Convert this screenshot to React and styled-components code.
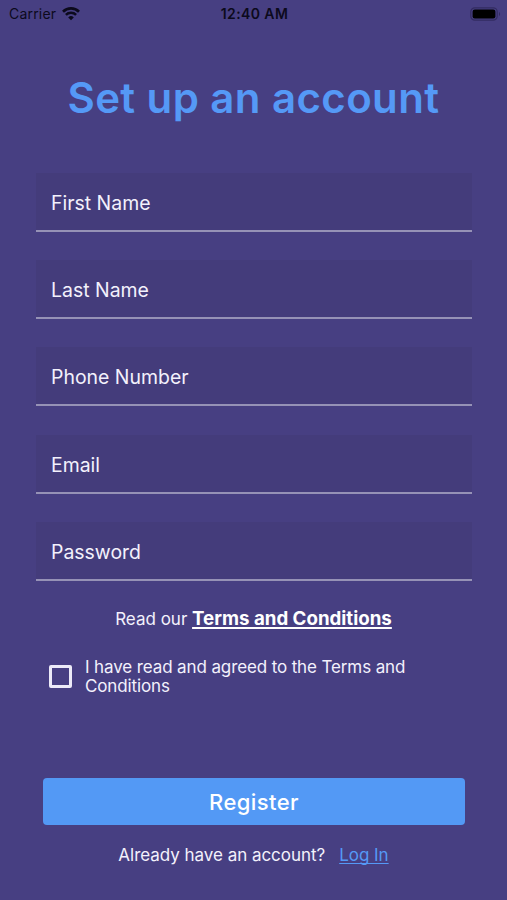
import React, { useState } from 'react';
import styled, { createGlobalStyle } from 'styled-components';

const GlobalStyle = createGlobalStyle`
	* {
		box-sizing: border-box;
	}

	body {
		margin: 0;
		background: #473f82;
		font-family: Inter, 'Liberation Sans', sans-serif;
	}
`;

const Screen = styled.main`
	display: flex;
	flex-direction: column;
	width: 507px;
	height: 900px;
	overflow: hidden;
	background: #473f82;
	color: #f3f1fc;
	white-space: nowrap;
`;

const StatusBar = styled.header`
	display: grid;
	grid-template-columns: 1fr auto 1fr;
	align-items: center;
	height: 28px;
	padding: 0 6px 0 9px;
	color: #0c0a1c;
	font-size: 14px;
	line-height: 28px;
`;

const Carrier = styled.div`
	display: flex;
	align-items: center;
	gap: 6px;
	letter-spacing: 0.2px;
`;

const Clock = styled.div`
	margin-right: 1px;
	font-weight: 600;
	letter-spacing: 0.4px;
`;

const BatteryIcon = styled.svg`
	justify-self: end;
`;

const Title = styled.h1`
	margin: 45px 0 0;
	color: #5599f6;
	font-size: 42px;
	font-weight: 600;
	line-height: 50px;
	letter-spacing: 0.4px;
	text-align: center;
`;

const Fields = styled.div`
	display: grid;
	gap: 28.2px;
	margin: 50px 35px 0 36px;
`;

const Field = styled.div`
	height: 59px;
	padding: 0 15px;
	border-bottom: 2px solid #9692b6;
	background: #443c7b;
	font-size: 19.45px;
	line-height: 60px;
`;

const Terms = styled.p`
	margin: 24px 0 0;
	font-size: 17px;
	line-height: 28px;
	text-align: center;
`;

const TermsLink = styled.a`
	color: #ffffff;
	font-size: 18.7px;
	font-weight: 700;
	text-decoration: underline;
	text-decoration-thickness: 1.5px;
	text-underline-offset: 2px;
	text-decoration-skip-ink: none;
`;

const Agreement = styled.label`
	display: flex;
	align-items: center;
	gap: 13px;
	margin: 25px 0 0 49px;
	font-size: 17px;
	line-height: 19.5px;
	letter-spacing: -0.12px;
`;

const Checkbox = styled.input`
	appearance: none;
	width: 23px;
	height: 23px;
	margin: 0 0 2px;
	border: 3px solid #eceaf8;
	border-radius: 2px;

	&:checked {
		background: #5399f5;
	}
`;

const RegisterButton = styled.button`
	height: 47px;
	margin: 81px 42px 0 43px;
	padding: 1px 0 0;
	border: none;
	border-radius: 4px;
	background: #5399f5;
	color: #ffffff;
	font-family: inherit;
	font-size: 22px;
	font-weight: 500;
	line-height: 46px;
	letter-spacing: 0.4px;
`;

const LoginRow = styled.div`
	display: flex;
	justify-content: center;
	gap: 14px;
	margin-top: 18px;
	font-size: 17px;
	line-height: 24px;
	letter-spacing: -0.03px;
`;

const LoginLink = styled.a`
	color: #5599f6;
	text-decoration: underline;
	text-decoration-thickness: 1px;
	text-underline-offset: 2px;
	text-decoration-skip-ink: none;
`;

const fields = ['First Name', 'Last Name', 'Phone Number', 'Email', 'Password'];

const App = () => {
	const [agreed, setAgreed] = useState(false);

	return (
		<>
			<GlobalStyle />
			<Screen>
				<StatusBar>
					<Carrier>
						<span>Carrier</span>
						<svg width='18' height='14' viewBox='0 0 18 14' fill='none' stroke='#0c0a1c'>
							<path d='M1 4.7a11.5 11.5 0 0 1 16 0' strokeWidth='2.7' />
							<path d='M3.9 7.9a7.2 7.2 0 0 1 10.2 0' strokeWidth='2.5' />
							<path d='M9 13.2 6.2 10.4a4 4 0 0 1 5.6 0Z' fill='#0c0a1c' stroke='none' />
						</svg>
					</Carrier>
					<Clock>12:40 AM</Clock>
					<BatteryIcon width='31' height='14' viewBox='0 0 31 14'>
						<rect x='0.8' y='0.8' width='26.4' height='12.4' rx='4' fill='none' stroke='#332c61' strokeWidth='1.2' />
						<rect x='2.6' y='2.6' width='22.8' height='8.8' rx='2.2' fill='#000000' />
						<path d='M29 5v4a2.4 2.4 0 0 0 0-4Z' fill='#332c61' />
					</BatteryIcon>
				</StatusBar>
				<Title>Set up an account</Title>
				<Fields>
					{fields.map((name) => (
						<Field key={name}>{name}</Field>
					))}
				</Fields>
				<Terms>
					Read our <TermsLink>Terms and Conditions</TermsLink>
				</Terms>
				<Agreement>
					<Checkbox type='checkbox' checked={agreed} onChange={() => setAgreed(!agreed)} />
					<span>
						I have read and agreed to the Terms and
						<br />
						Conditions
					</span>
				</Agreement>
				<RegisterButton>Register</RegisterButton>
				<LoginRow>
					<span>Already have an account?</span>
					<LoginLink>Log In</LoginLink>
				</LoginRow>
			</Screen>
		</>
	);
};

export default App;
